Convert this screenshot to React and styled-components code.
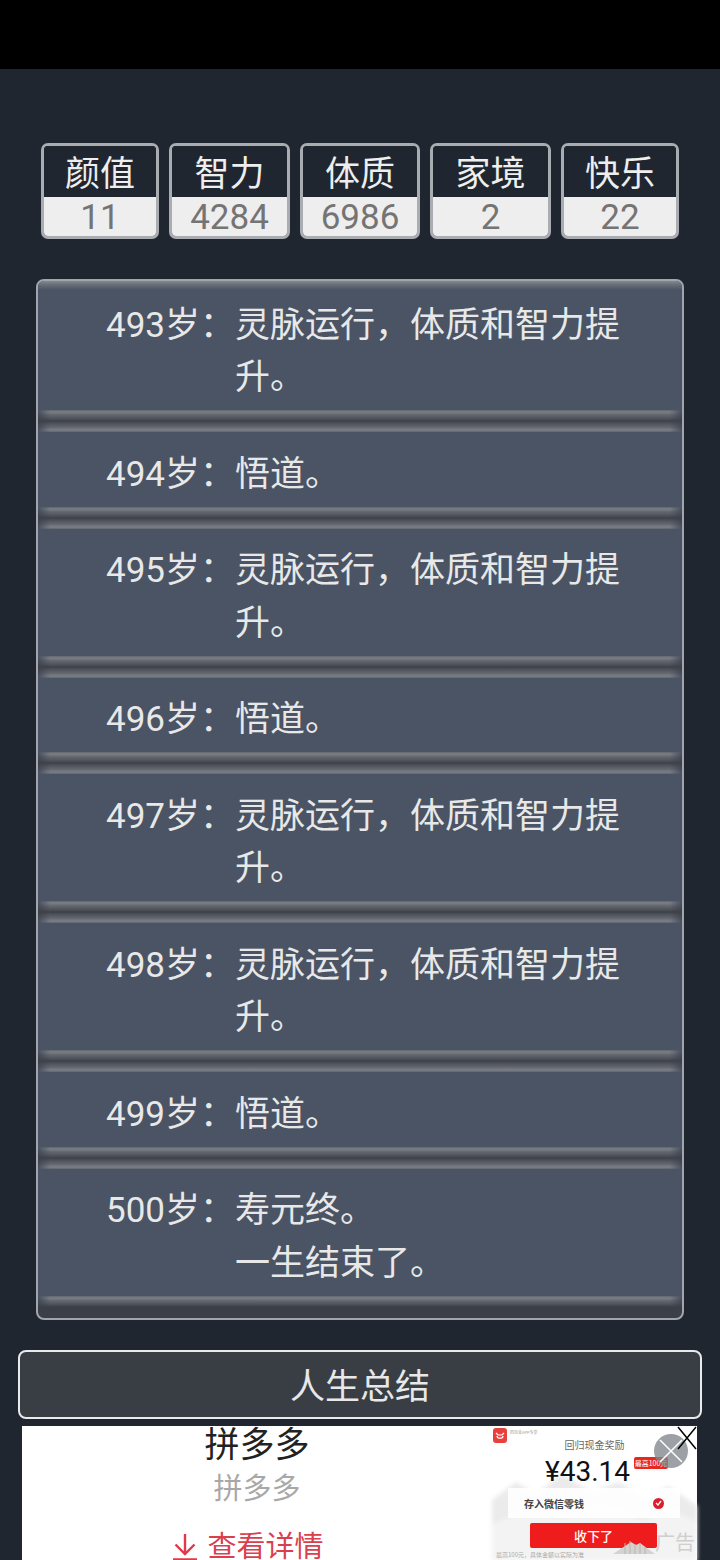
import React from 'react';
import styled, { createGlobalStyle } from 'styled-components';

const stats = [
  { label: '颜值', value: 11 },
  { label: '智力', value: 4284 },
  { label: '体质', value: 6986 },
  { label: '家境', value: 2 },
  { label: '快乐', value: 22 },
];

const LONG = ['灵脉运行，体质和智力提升。'];
const SHORT = ['悟道。'];
const events = [
  { age: 493, lines: LONG },
  { age: 494, lines: SHORT },
  { age: 495, lines: LONG },
  { age: 496, lines: SHORT },
  { age: 497, lines: LONG },
  { age: 498, lines: LONG },
  { age: 499, lines: SHORT },
  { age: 500, lines: ['寿元终。', '一生结束了。'] },
];

export default function App() {
  return (
    <Page>
      <GlobalStyle />
      <StatusBar />
      <StatsRow>
        {stats.map(({ label, value }) => (
          <StatCard key={label}>
            <StatLabel>{label}</StatLabel>
            <StatValue>{value}</StatValue>
          </StatCard>
        ))}
      </StatsRow>
      <Trajectory>
        <TrajectoryScroll>
          {events.map(({ age, lines }) => (
            <React.Fragment key={age}>
              <EventRow>
                <Age>{age}岁：</Age>
                <EventText>
                  {lines.map(line => (
                    <div key={line}>{line}</div>
                  ))}
                </EventText>
              </EventRow>
              <Divider />
            </React.Fragment>
          ))}
        </TrajectoryScroll>
      </Trajectory>
      <SummaryButton>人生总结</SummaryButton>
      <Ad>
        <AdCopy>
          <AdTitle>拼多多</AdTitle>
          <AdSubtitle>拼多多</AdSubtitle>
          <AdLink>
            <svg width="26" height="28" viewBox="0 0 26 28" fill="none" stroke="#e0394a" strokeWidth="2.4">
              <path d="M13 1v19M3.500 11.500 13 21l9.500-9.500M1 26.500h24" />
            </svg>
            查看详情
          </AdLink>
        </AdCopy>
        <AdImage>
          <Mountains viewBox="0 0 205 135" preserveAspectRatio="none">
            <path d="M0 74 24 56l20 12 26-20 30 18 26-10 30 16 20-12 29 20v57H0z" fill="#ebebeb" />
            <path d="M0 98 40 82l30 10 40-14 40 16 30-10 25 12v39H0z" fill="#f3f3f3" />
          </Mountains>
          <AdBrand>
            <AdLogo>
              <svg width="10" height="10" viewBox="0 0 10 10" fill="none" stroke="#fff" strokeWidth="1.2">
                <path d="M1 2 3 4h4l2-2M2 5c0 3 6 3 6 0M4 7h2" />
              </svg>
            </AdLogo>
            <AdBrandText>四百金APP专享</AdBrandText>
          </AdBrand>
          <RewardTitle>回归现金奖励</RewardTitle>
          <RewardAmount>¥43.14</RewardAmount>
          <WalletRow>
            存入微信零钱
            <WalletCheck>
              <svg width="7" height="6" viewBox="0 0 7 6" fill="none" stroke="#fff" strokeWidth="1.3">
                <path d="M1 3l2 2 3-4" />
              </svg>
            </WalletCheck>
          </WalletRow>
          <AcceptButton>收下了</AcceptButton>
          <FootNote>最高100元，具体金额以实际为准</FootNote>
          <RewardBadge>最高100元</RewardBadge>
          <Watermark>
            <svg width="42" height="16" viewBox="0 0 42 16">
              <path d="M0 16 18 4l5 3 4-2 15 11z" fill="#d6d2d0" />
              <path d="M12 5v11M17 3v13M22 6v10M27 5v11M32 9v7" stroke="#b8b4b2" strokeWidth="1" />
            </svg>
            <WatermarkText>广告</WatermarkText>
          </Watermark>
          <CloseCircle>
            <svg width="34" height="34" viewBox="0 0 34 34" stroke="#fff" strokeWidth="1.5">
              <path d="M6 6l22 22M28 6 6 28" />
            </svg>
          </CloseCircle>
          <CloseCross width="20" height="24" viewBox="0 0 20 24" stroke="#000" strokeWidth="1.5">
            <path d="M1 1l18 22M19 1 1 23" />
          </CloseCross>
        </AdImage>
      </Ad>
    </Page>
  );
}

const GlobalStyle = createGlobalStyle`
  html, body {
    margin: 0;
    padding: 0;
    background: #1f2630;
  }
`;

const Page = styled.div`
  width: 720px;
  height: 1560px;
  overflow: hidden;
  display: flex;
  flex-direction: column;
  background: #1f2630;
  font-family: Roboto, 'Noto Sans CJK SC', sans-serif;
`;

const StatusBar = styled.div`
  height: 69px;
  flex: none;
  background: #000;
`;

const StatsRow = styled.div`
  display: grid;
  grid-template-columns: 118px 121px 120px 121px 118px;
  gap: 10px;
  margin: 74px 0 0 41px;
  width: 640px;
  height: 96px;
  flex: none;
`;

const StatCard = styled.div`
  display: flex;
  flex-direction: column;
  overflow: hidden;
  box-sizing: border-box;
  border: 3px solid #a9adb1;
  border-radius: 7px;
`;

const StatLabel = styled.div`
  height: 51px;
  background: #1f2630;
  color: #eeeeee;
  font-size: 35px;
  line-height: 58px;
  text-align: center;
`;

const StatValue = styled.div`
  flex: 1;
  background: #eeeeee;
  color: #747474;
  font-size: 35px;
  line-height: 42px;
  text-align: center;
`;

const Trajectory = styled.div`
  box-sizing: border-box;
  flex: none;
  width: 648px;
  height: 1041px;
  margin: 40px 0 0 36px;
  border: 2px solid #a2a6ac;
  border-radius: 8px;
  overflow: hidden;
  background: #3b3f47;
`;

const TrajectoryScroll = styled.div`
  display: flex;
  flex-direction: column;
`;

const EventRow = styled.div`
  display: flex;
  padding: 16.5px 60px 5.5px 68px;
  background: #4a5464;
  color: #e8e8e8;
  font-size: 35px;
  line-height: 52.5px;

  &:first-child {
    padding-top: 18.500px;
    background: linear-gradient(to bottom, #868a90 0, #6d727b 3px, #4a5464 9px);
  }
`;

const Age = styled.div`
  flex: none;
  width: 129px;
  white-space: nowrap;
`;

const EventText = styled.div`
  flex: 1;
`;

const Divider = styled.div`
  position: relative;
  height: 22px;
  background: linear-gradient(
    to bottom,
    #4a5464 0,
    #3e4148 50%,
    #4a5464 100%
  );

  &::before {
    content: '';
    position: absolute;
    inset: 0;
    background: linear-gradient(
      to bottom,
      #62676f 0,
      #7b7f86 2px,
      #62656c 5px,
      rgba(62, 65, 72, 0) 50%,
      #62656c calc(100% - 5px),
      #7b7f86 calc(100% - 2px),
      #62676f 100%
    );
    mask-image: linear-gradient(to right, transparent 0, #000 12px, #000 calc(100% - 12px), transparent 100%);
  }

  &:last-child {
    height: 11px;
    background: linear-gradient(to bottom, #4a5464, #3b3f47);
  }

  &:last-child::before {
    background: linear-gradient(to bottom, #62676f 0, #7b7f86 2px, #62656c 5px, rgba(59, 62, 69, 0) 100%);
  }
`;

const SummaryButton = styled.div`
  flex: none;
  box-sizing: border-box;
  width: 684px;
  height: 69px;
  margin: 30px 0 0 18px;
  border: 2px solid #e8eaec;
  border-radius: 8px;
  background: #393d44;
  color: #e8e8e8;
  font-size: 35px;
  line-height: 71px;
  text-align: center;
`;

const Ad = styled.div`
  flex: none;
  display: flex;
  width: 675px;
  height: 135px;
  margin: 7px 0 0 22px;
  background: #fff;
`;

const AdCopy = styled.div`
  width: 470px;
  display: flex;
  flex-direction: column;
  align-items: center;
`;

const AdTitle = styled.div`
  color: #222;
  font-size: 35px;
  line-height: 40px;
`;

const AdSubtitle = styled.div`
  color: #a8a8a8;
  font-size: 29px;
  line-height: 46px;
`;

const AdLink = styled.div`
  display: flex;
  align-items: center;
  gap: 9px;
  margin: 21px 18px 0 0;
  color: #d9404e;
  font-size: 29px;
  line-height: 28px;
`;

const AdImage = styled.div`
  position: relative;
  width: 205px;
  display: flex;
  flex-direction: column;
  align-items: center;
  font-family: 'Noto Sans CJK SC', sans-serif;
`;

const Mountains = styled.svg`
  position: absolute;
  inset: 0;
  width: 100%;
  height: 100%;
  filter: blur(2px);
`;

const AdBrand = styled.div`
  position: relative;
  align-self: flex-start;
  display: flex;
  gap: 3px;
  margin: 2px 0 0 1px;
  height: 15px;
`;

const AdLogo = styled.div`
  width: 14px;
  height: 15px;
  border-radius: 3px;
  background: #e8403c;
  display: flex;
  align-items: center;
  justify-content: center;
`;

const AdBrandText = styled.div`
  color: #999;
  font-size: 4px;
  line-height: 9px;
`;

const RewardTitle = styled.div`
  position: relative;
  color: #666;
  font-size: 10px;
  line-height: 14px;
  margin-top: -5px;
`;

const RewardAmount = styled.div`
  position: relative;
  color: #111;
  font-family: Roboto, sans-serif;
  font-size: 28px;
  line-height: 32px;
  margin: 4px 14px 0 0;
`;

const WalletRow = styled.div`
  position: relative;
  box-sizing: border-box;
  display: flex;
  align-items: center;
  justify-content: space-between;
  align-self: flex-end;
  width: 172px;
  height: 30px;
  margin: 0 17px 0 0;
  padding: 0 16px;
  background: rgba(255, 255, 255, 0.9);
  color: #444;
  font-size: 10px;
  font-weight: 700;
`;

const WalletCheck = styled.div`
  width: 11px;
  height: 11px;
  border-radius: 50%;
  background: #d8202c;
  display: flex;
  align-items: center;
  justify-content: center;
`;

const AcceptButton = styled.div`
  position: relative;
  width: 127px;
  height: 25px;
  margin: 5px 0 0 -2px;
  border-radius: 2px;
  background: #ee1c1c;
  color: #fff;
  font-size: 13px;
  font-weight: 500;
  line-height: 25px;
  text-align: center;
`;

const FootNote = styled.div`
  position: relative;
  align-self: flex-start;
  margin: 3px 0 0 4px;
  color: #aaa;
  font-size: 6px;
  line-height: 8px;
  white-space: nowrap;
`;

const RewardBadge = styled.div`
  position: absolute;
  left: 142px;
  top: 31px;
  width: 34px;
  height: 12px;
  border-radius: 2px;
  background: #e8281f;
  color: #fff;
  font-size: 7px;
  line-height: 12px;
  text-align: center;
`;

const Watermark = styled.div`
  position: absolute;
  right: 2px;
  top: 104px;
  display: flex;
  align-items: flex-end;
`;

const WatermarkText = styled.div`
  color: #cfcfcf;
  font-size: 20px;
  line-height: 24px;
`;

const CloseCircle = styled.div`
  position: absolute;
  left: 162px;
  top: 8px;
  width: 34px;
  height: 34px;
  border-radius: 50%;
  background: rgba(130, 134, 140, 0.78);
`;

const CloseCross = styled.svg`
  position: absolute;
  right: 0;
  top: 0;
`;
